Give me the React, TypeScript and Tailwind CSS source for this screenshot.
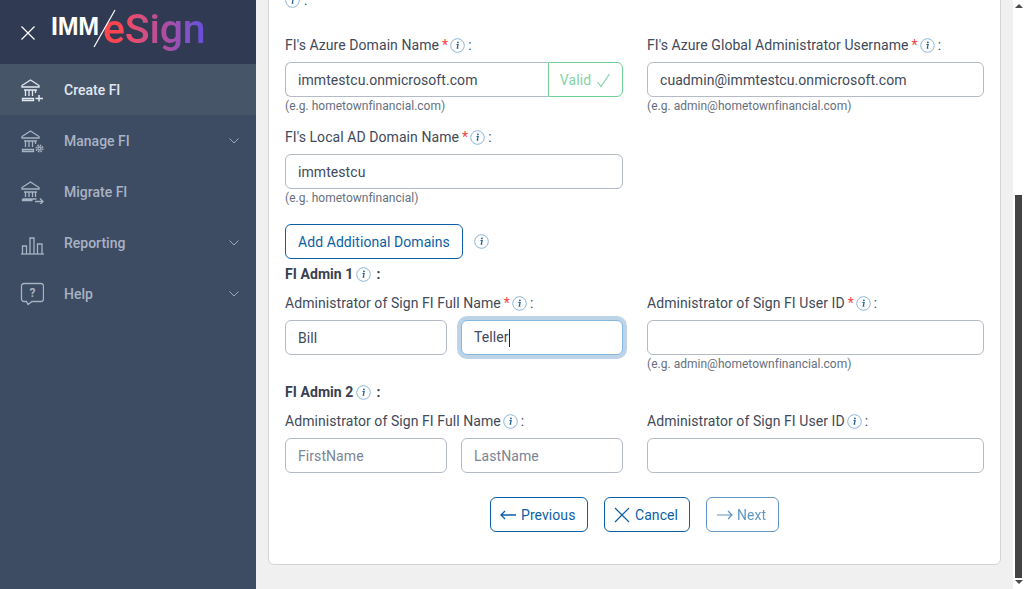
import { ReactNode } from 'react';

const BankBase = () => (
  <>
    <path d="M2 7.5 10.5 2 19 7.5V9H2Z" />
    <path d="M4 12h13M5.5 12v6M9 12v6M12.5 12v6M15.500 12v3" />
    <path d="M2.5 20.5h11v2h-11z" />
  </>
);

const CreateIcon = () => (
  <svg width="24" height="24" viewBox="0 0 24 24" fill="none" stroke="currentColor" strokeWidth="1.3">
    <BankBase />
    <path d="M19 17v6.500M15.500 20.500h7.500" strokeWidth="1.500" />
  </svg>
);

const ManageIcon = () => (
  <svg width="24" height="24" viewBox="0 0 24 24" fill="none" stroke="currentColor" strokeWidth="1.3">
    <BankBase />
    <circle cx="19.500" cy="19.500" r="1.500" />
    <circle cx="19.500" cy="19.500" r="3.200" strokeWidth="1.700" strokeDasharray="1.500 1" />
  </svg>
);

const MigrateIcon = () => (
  <svg width="24" height="24" viewBox="0 0 24 24" fill="none" stroke="currentColor" strokeWidth="1.3">
    <path d="M2 7.500 10.500 2 19 7.500V9H2Z" />
    <path d="M4 12h13M5.500 12v5M9 12v5M12.500 12v5M15.500 12v5" />
    <path d="M2.500 19h14M2.500 19v1.500h10M15 21.500h8M20 18.500l3 3-3 3" />
  </svg>
);

const ReportIcon = () => (
  <svg width="24" height="24" viewBox="0 0 24 24" fill="none" stroke="currentColor" strokeWidth="1.3">
    <path d="M1 23h23" />
    <path d="M2.500 23v-8h4v8M10 23V7h4v16M17.500 23V13h4.500v10" />
  </svg>
);

const HelpIcon = () => (
  <svg width="24" height="24" viewBox="0 0 24 24" fill="none" stroke="currentColor" strokeWidth="1.3">
    <path d="M4 1.500h17a2.500 2.500 0 0 1 2.500 2.500v13a2.500 2.500 0 0 1-2.500 2.500h-9l-4 3-1.500-3H4A2.500 2.500 0 0 1 1.500 17V4A2.500 2.500 0 0 1 4 1.500Z" />
    <text x="12.500" y="15" textAnchor="middle" fontSize="12" fontWeight="700" fill="currentColor" stroke="none" fontFamily="Roboto, sans-serif">?</text>
  </svg>
);

const InfoIcon = () => (
  <svg width="15" height="15" viewBox="0 0 15 15" fill="none" className="shrink-0">
    <circle cx="7.500" cy="7.500" r="6.800" stroke="#8db4d6" />
    <circle cx="7.900" cy="4.400" r="0.900" fill="#1f5f95" />
    <path d="M6.500 6.500h1.600l-.8 3.600h1" stroke="#1f5f95" strokeWidth="1.200" />
  </svg>
);

const Chevron = () => (
  <svg width="10" height="6" viewBox="0 0 10 6" fill="none" stroke="currentColor" strokeWidth="0.900" className="mt-[1px]">
    <path d="M0.500 0.500 5 5 9.500 0.500" />
  </svg>
);

const navItems = [
  { label: 'Create FI', icon: <CreateIcon />, active: true },
  { label: 'Manage FI', icon: <ManageIcon />, caret: true },
  { label: 'Migrate FI', icon: <MigrateIcon /> },
  { label: 'Reporting', icon: <ReportIcon />, caret: true },
  { label: 'Help', icon: <HelpIcon />, caret: true },
];

function Sidebar() {
  return (
    <aside className="w-[256px] shrink-0 bg-[#3d4b63] flex flex-col">
      <div className="h-[64px] bg-[#303b53] flex items-center pl-[21px]">
        <svg width="14" height="14" viewBox="0 0 14 14" stroke="#ffffff" strokeWidth="1.2" className="mt-[2px]">
          <path d="M0.500 0.500l13 13M13.500 0.500l-13 13" />
        </svg>
        <div className="relative flex items-start ml-[16px] h-[64px] w-[160px]">
          <span className="mt-[12px] text-white font-bold text-[25px] leading-[29px] [font-family:'Liberation_Sans',sans-serif] tracking-[-0.2px]">IMM</span>
          <svg width="24" height="40" viewBox="0 0 24 40" className="absolute left-[42px] top-[9px]">
            <path d="M22 1 1 38" stroke="#ffffff" strokeWidth="1.200" />
          </svg>
          <span className="ml-[4px] mt-[5px] text-[41px] leading-[48px] font-medium tracking-[-0.2px] bg-linear-to-r from-[#ff4650] from-[15%] via-[#b04da0] via-[60%] to-[#6c4fd8] to-[95%] bg-clip-text text-transparent">eSign</span>
        </div>
      </div>
      {navItems.map((item) => (
        <div
          key={item.label}
          className={`h-[51px] flex items-center pl-[20px] pr-[17px] ${item.active ? 'bg-[#475569] text-[#e2e8f0]' : 'text-[#a8b3c4]'}`}
        >
          <span className="w-[44px] flex">{item.icon}</span>
          <span className="flex-1 text-[14px] font-medium pt-[2px]">{item.label}</span>
          {item.caret && <Chevron />}
        </div>
      ))}
    </aside>
  );
}

function Label({ text, required, noSpace }: { text: string; required?: boolean; noSpace?: boolean }) {
  return (
    <div className="h-[20px] mb-[7px] flex items-center text-[14px] text-[#3f4a5a] whitespace-nowrap">
      <span>{text}</span>
      {required && <span className="text-[#ef4444] ml-[3px]">*</span>}
      <span className={noSpace ? 'ml-[2px] flex' : 'ml-[2px] flex'}>
        <InfoIcon />
      </span>
      <span className="ml-[3px]">:</span>
    </div>
  );
}

function Heading({ text, className }: { text: string; className: string }) {
  return (
    <div className={`h-[20px] flex items-center text-[14px] font-bold text-[#374151] ${className}`}>
      <span>{text}</span>
      <span className="ml-[3px] flex">
        <InfoIcon />
      </span>
      <span className="ml-[5px]">:</span>
    </div>
  );
}

function TextInput({ value, placeholder, className = '' }: { value?: string; placeholder?: string; className?: string }) {
  return (
    <input
      readOnly
      value={value ?? ''}
      placeholder={placeholder}
      className={`h-[35px] w-full min-w-0 rounded-[6px] border border-[#b4bac6] bg-white px-[12px] text-[14px] text-[#3f4a5a] placeholder:text-[#7a8494] outline-none ${className}`}
    />
  );
}

const Hint = ({ text }: { text: string }) => (
  <div className="h-[16px] pt-[2px] flex items-center text-[12px] tracking-[0.02px] text-[#667080]">{text}</div>
);

function ActionButton({ children, className }: { children: ReactNode; className: string }) {
  return (
    <button className={`h-[35px] pt-[2px] flex items-center rounded-[6px] border border-[#0b5fa5] bg-white text-[14px] text-[#0b5fa5] ${className}`}>
      {children}
    </button>
  );
}

function Form() {
  return (
    <div className="bg-white border border-[#d4d4d4] rounded-b-[6px] mx-[12px] -mt-[9px] px-[16px] pb-[32px] tracking-[0.07px]">
      <div className="h-[16px] flex items-center text-[14px] text-[#3f4a5a] mb-[27px]">
        <InfoIcon />
        <span className="ml-[4px]">:</span>
      </div>

      <div className="grid grid-cols-[338px_337px] gap-x-[24px]">
        <div className="pb-[14px]">
          <Label text="FI's Azure Domain Name" required />
          <div className="flex h-[35px]">
            <TextInput value="immtestcu.onmicrosoft.com" className="rounded-r-none border-r-0 flex-1" />
            <div className="w-[75px] shrink-0 pt-[2px] rounded-r-[6px] border border-[#6fcf97] flex items-center justify-center gap-[5px] text-[14px] text-[#84d3a5]">
              Valid
              <svg width="15" height="15" viewBox="0 0 15 15" fill="none" stroke="#84d3a5" strokeWidth="1.200">
                <path d="M1.500 9 5 13.500 13.500 1" />
              </svg>
            </div>
          </div>
          <Hint text="(e.g. hometownfinancial.com)" />
        </div>
        <div className="pb-[14px]">
          <Label text="FI's Azure Global Administrator Username" required />
          <TextInput value="cuadmin@immtestcu.onmicrosoft.com" />
          <Hint text="(e.g. admin@hometownfinancial.com)" />
        </div>
        <div>
          <Label text="FI's Local AD Domain Name" required />
          <TextInput value="immtestcu" />
          <Hint text="(e.g. hometownfinancial)" />
        </div>
      </div>

      <div className="mt-[19px] flex items-center">
        <ActionButton className="w-[178px] pl-[12px]">Add Additional Domains</ActionButton>
        <span className="ml-[11px] flex">
          <InfoIcon />
        </span>
      </div>

      <Heading text="FI Admin 1" className="mt-[5px] mb-[9px]" />

      <div className="grid grid-cols-[338px_337px] gap-x-[24px]">
        <div>
          <Label text="Administrator of Sign FI Full Name" required />
          <div className="grid grid-cols-[162px_162px] gap-x-[14px]">
            <TextInput value="Bill" />
            <div className="h-[35px] rounded-[6px] border border-[#86b7e0] bg-white px-[12px] flex items-center text-[14px] text-[#3f4a5a] shadow-[0_0_0_4px_#bcd3e8]">
              Teller
              <span className="w-px h-[18px] bg-[#1f2937]" />
            </div>
          </div>
        </div>
        <div>
          <Label text="Administrator of Sign FI User ID" required />
          <TextInput />
          <Hint text="(e.g. admin@hometownfinancial.com)" />
        </div>
      </div>

      <Heading text="FI Admin 2" className="mt-[11px] mb-[9px]" />

      <div className="grid grid-cols-[338px_337px] gap-x-[24px]">
        <div>
          <Label text="Administrator of Sign FI Full Name" noSpace />
          <div className="grid grid-cols-[162px_162px] gap-x-[14px]">
            <TextInput placeholder="FirstName" />
            <TextInput placeholder="LastName" />
          </div>
        </div>
        <div>
          <Label text="Administrator of Sign FI User ID" />
          <TextInput />
        </div>
      </div>

      <div className="mt-[24px] flex justify-center gap-[16px]">
        <ActionButton className="w-[98px] pl-[9px] gap-[5px]">
          <svg width="16" height="10" viewBox="0 0 16 10" fill="none" stroke="currentColor" strokeWidth="1.300" className="-mt-[2px]">
            <path d="M16 5H1M5 1 1 5l4 4" />
          </svg>
          Previous
        </ActionButton>
        <ActionButton className="w-[86px] pl-[9px] gap-[5px]">
          <svg width="16" height="16" viewBox="0 0 16 16" fill="none" stroke="currentColor" strokeWidth="1.200" className="-mt-[2px]">
            <path d="M1 1l14 14M15 1 1 15" />
          </svg>
          Cancel
        </ActionButton>
        <ActionButton className="w-[73px] pl-[10px] gap-[4px] opacity-65">
          <svg width="16" height="10" viewBox="0 0 16 10" fill="none" stroke="currentColor" strokeWidth="1.200" className="-mt-[2px]">
            <path d="M0 5h15M11 1l4 4-4 4" />
          </svg>
          Next
        </ActionButton>
      </div>
    </div>
  );
}

function Scrollbar() {
  return (
    <div className="w-[11px] shrink-0 bg-white flex flex-col items-center">
      <div className="mt-[4px] border-x-[4px] border-b-[4px] border-x-transparent border-b-[#4a4a4a]" />
      <div className="mt-[187px] h-[383px] w-[7px] bg-[#434343]" />
      <div className="mt-[2px] border-x-[4px] border-t-[4px] border-x-transparent border-t-[#4a4a4a]" />
    </div>
  );
}

export default function App() {
  return (
    <div className="h-[589px] w-full flex overflow-hidden font-['Roboto',sans-serif]">
      <Sidebar />
      <main className="flex-1 bg-[#f0f0f0] overflow-hidden">
        <Form />
      </main>
      <Scrollbar />
    </div>
  );
}
